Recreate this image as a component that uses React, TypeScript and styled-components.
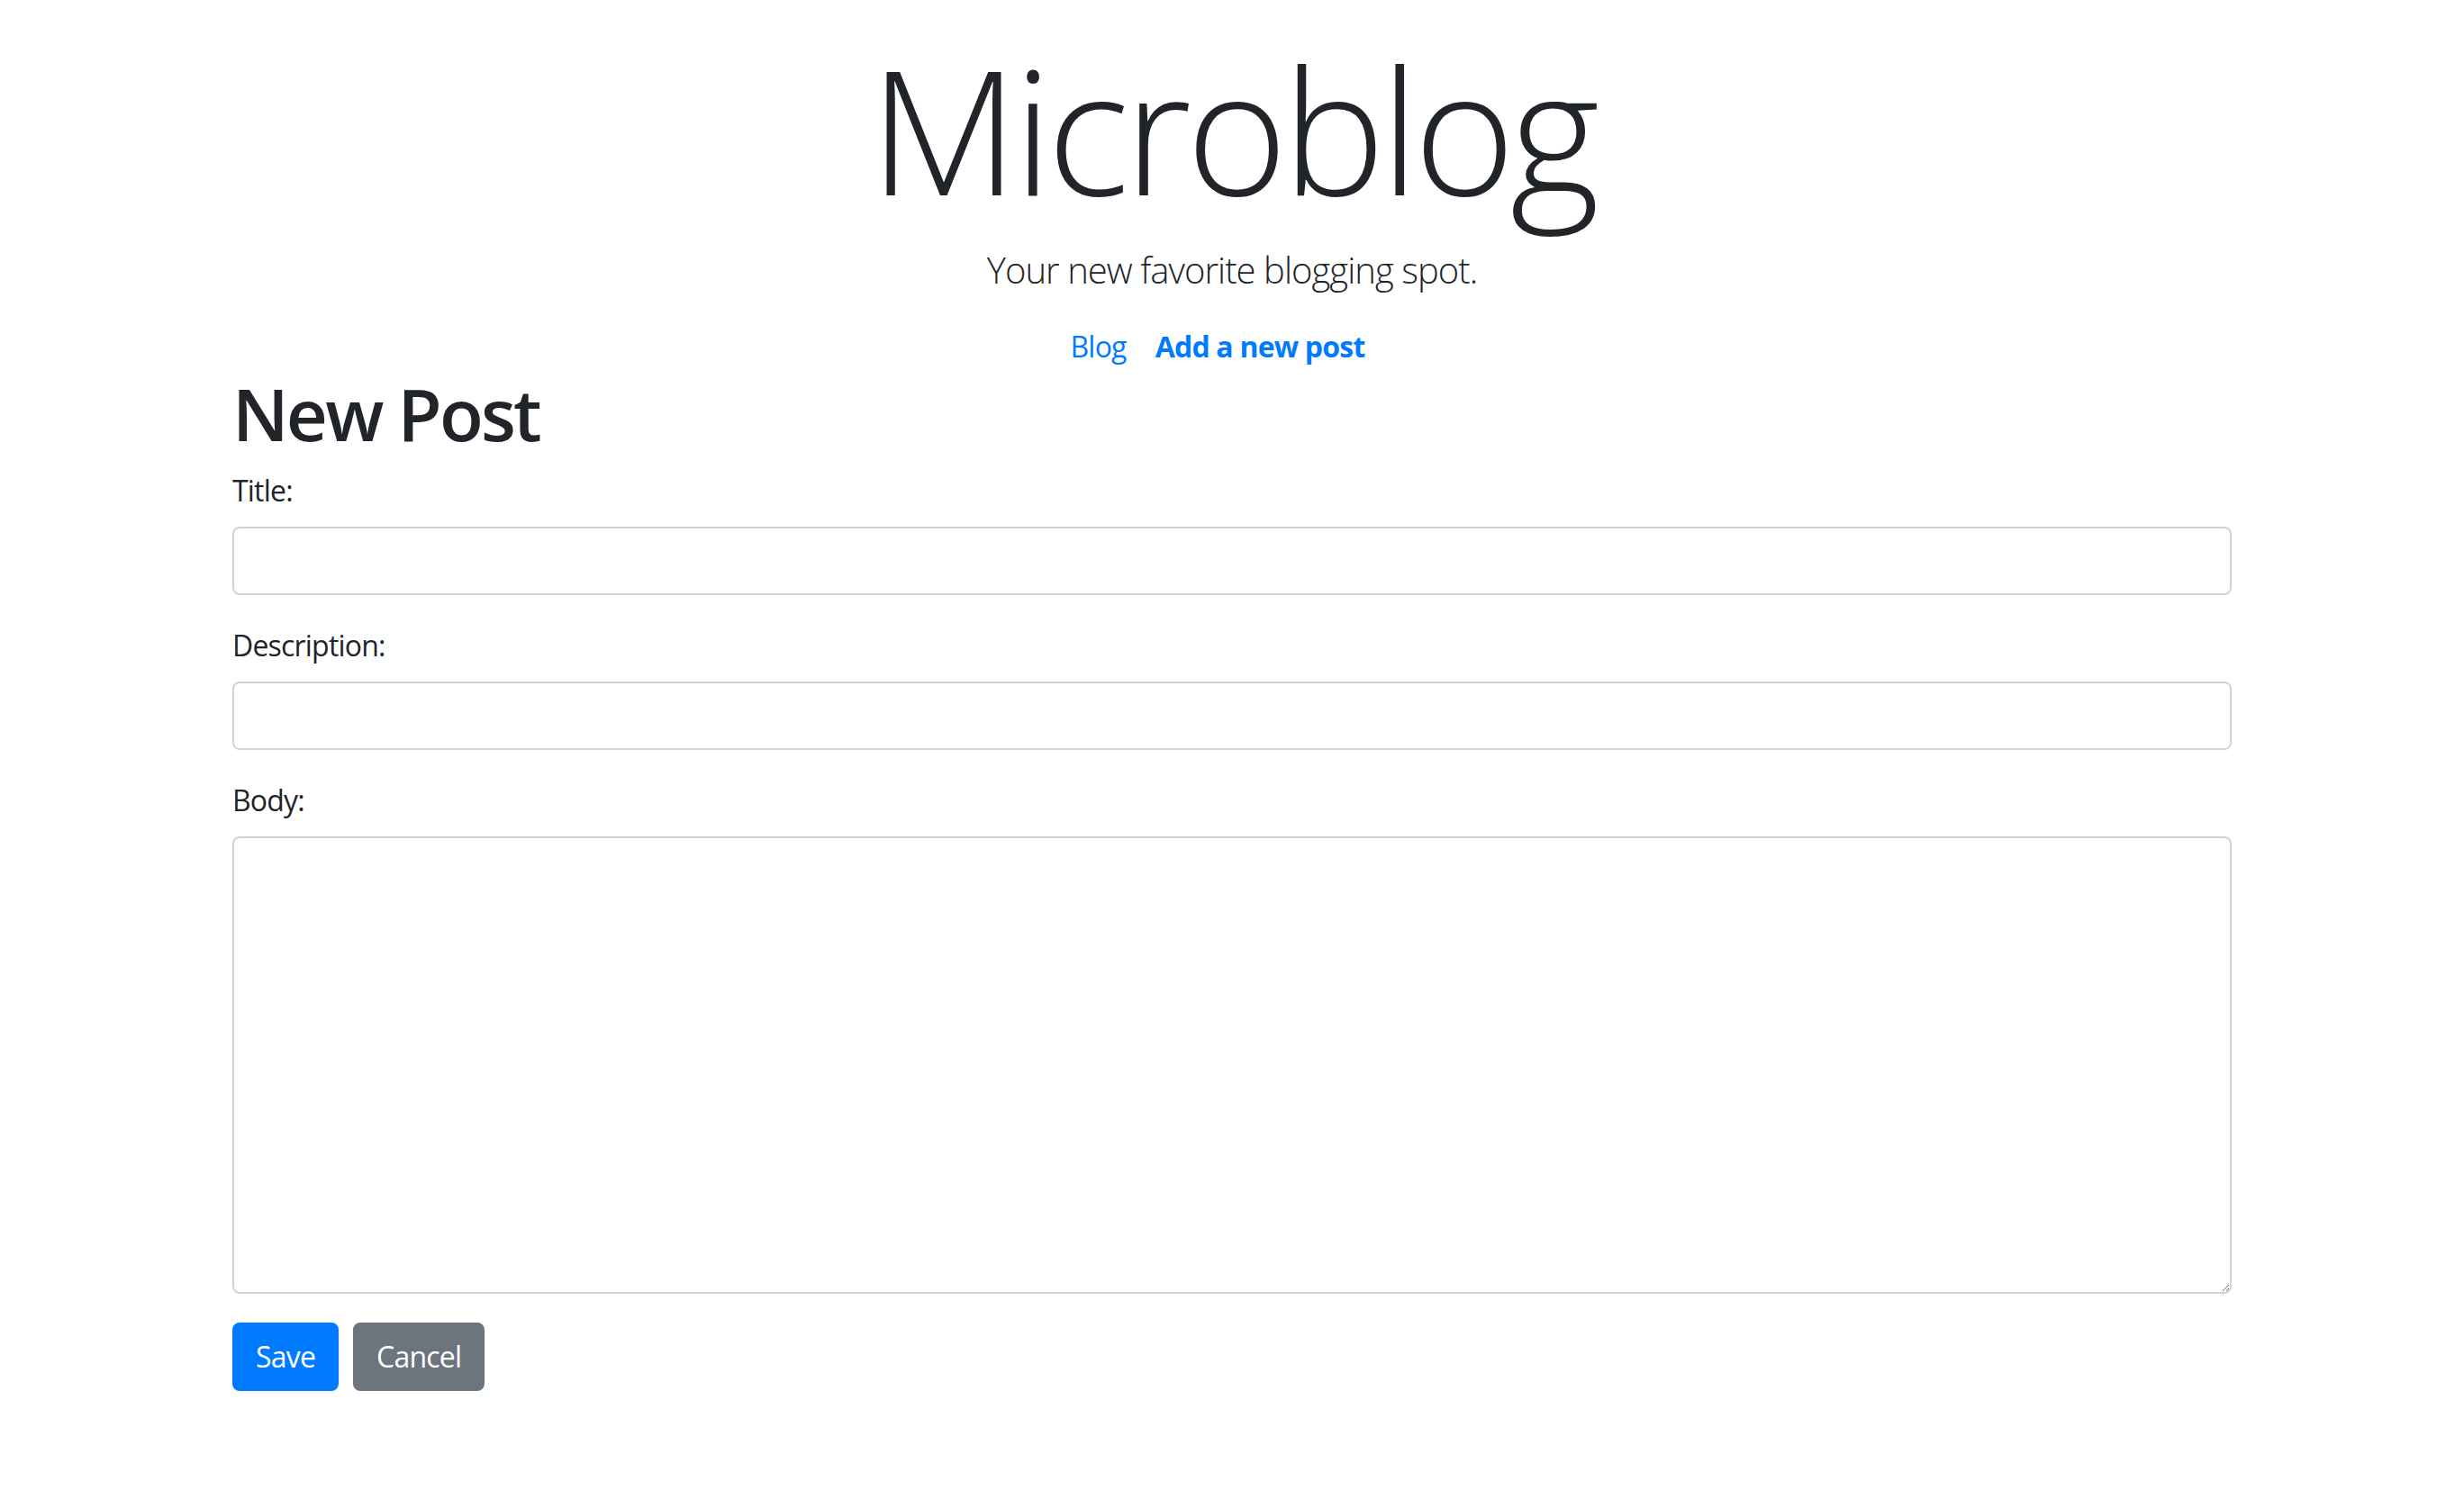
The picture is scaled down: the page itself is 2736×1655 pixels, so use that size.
import React from "react";
import styled, { createGlobalStyle } from "styled-components";

const GlobalStyle = createGlobalStyle`
  html, body {
    margin: 0;
    padding: 0;
    background: #ffffff;
  }
  body {
    font-family: "Open Sans", "Noto Sans", "Liberation Sans", sans-serif;
    color: #212529;
    font-size: 32px;
    line-height: 48px;
    letter-spacing: -0.8px;
  }
  * { box-sizing: border-box; }
`;

const Container = styled.div`
  width: 2220px;
  margin: 0 auto;
  padding-bottom: 60px;
`;

const Header = styled.header`
  display: flex;
  flex-direction: column;
  align-items: center;
  padding-top: 28px;
`;

const Brand = styled.h1`
  margin: 0;
  font-size: 192px;
  line-height: 230px;
  font-weight: 300;
  letter-spacing: -5.8px;
  color: #212529;
`;

const Lead = styled.p`
  margin: 12px 0 0;
  font-size: 40px;
  line-height: 60px;
  font-weight: 300;
  letter-spacing: -0.95px;
`;

const Nav = styled.nav`
  display: flex;
  justify-content: center;
  margin-top: 31px;
`;

const NavLink = styled.a<{ $active?: boolean }>`
  display: block;
  margin-right: 32px;
  font-size: 32px;
  line-height: 48px;
  color: #007bff;
  text-decoration: none;
  font-weight: ${(p) => (p.$active ? 700 : 400)};
  cursor: pointer;
`;

const Heading = styled.h2`
  margin: 2px 0 14px;
  font-size: 80px;
  line-height: 96px;
  font-weight: 600;
  letter-spacing: -2.8px;
`;

const Form = styled.form`
  display: flex;
  flex-direction: column;
`;

const Group = styled.div`
  display: flex;
  flex-direction: column;
  margin-bottom: 32px;
`;

const Label = styled.label`
  display: block;
  margin-bottom: 16px;
  font-size: 32px;
  line-height: 48px;
`;

const Input = styled.input`
  display: block;
  width: 100%;
  height: 76px;
  padding: 12px 24px;
  font: inherit;
  font-size: 32px;
  line-height: 48px;
  color: #495057;
  background: #fff;
  border: 2px solid #ced4da;
  border-radius: 8px;
  outline: none;
`;

const TextArea = styled.textarea`
  display: block;
  width: 100%;
  height: 508px;
  padding: 12px 24px;
  font: inherit;
  font-size: 32px;
  line-height: 48px;
  color: #495057;
  background: #fff;
  border: 2px solid #ced4da;
  border-radius: 8px;
  outline: none;
  resize: vertical;
`;

const Actions = styled.div`
  display: flex;
  gap: 16px;
`;

const Button = styled.button<{ $variant: "primary" | "secondary" }>`
  height: 76px;
  padding: 12px 24px;
  font-family: inherit;
  font-size: 32px;
  line-height: 48px;
  font-weight: 400;
  letter-spacing: -0.8px;
  color: #fff;
  border: 2px solid ${(p) => (p.$variant === "primary" ? "#007bff" : "#6c757d")};
  background: ${(p) => (p.$variant === "primary" ? "#007bff" : "#6c757d")};
  border-radius: 8px;
  cursor: pointer;
`;

export default function App() {
  return (
    <>
      <GlobalStyle />
      <Container>
        <Header>
          <Brand>Microblog</Brand>
          <Lead>Your new favorite blogging spot.</Lead>
          <Nav>
            <NavLink>Blog</NavLink>
            <NavLink $active>Add a new post</NavLink>
          </Nav>
        </Header>
        <Heading>New Post</Heading>
        <Form onSubmit={(e) => e.preventDefault()}>
          <Group>
            <Label htmlFor="title">Title:</Label>
            <Input id="title" type="text" />
          </Group>
          <Group>
            <Label htmlFor="description">Description:</Label>
            <Input id="description" type="text" />
          </Group>
          <Group>
            <Label htmlFor="body">Body:</Label>
            <TextArea id="body" />
          </Group>
          <Actions>
            <Button type="submit" $variant="primary">Save</Button>
            <Button type="button" $variant="secondary">Cancel</Button>
          </Actions>
        </Form>
      </Container>
    </>
  );
}
